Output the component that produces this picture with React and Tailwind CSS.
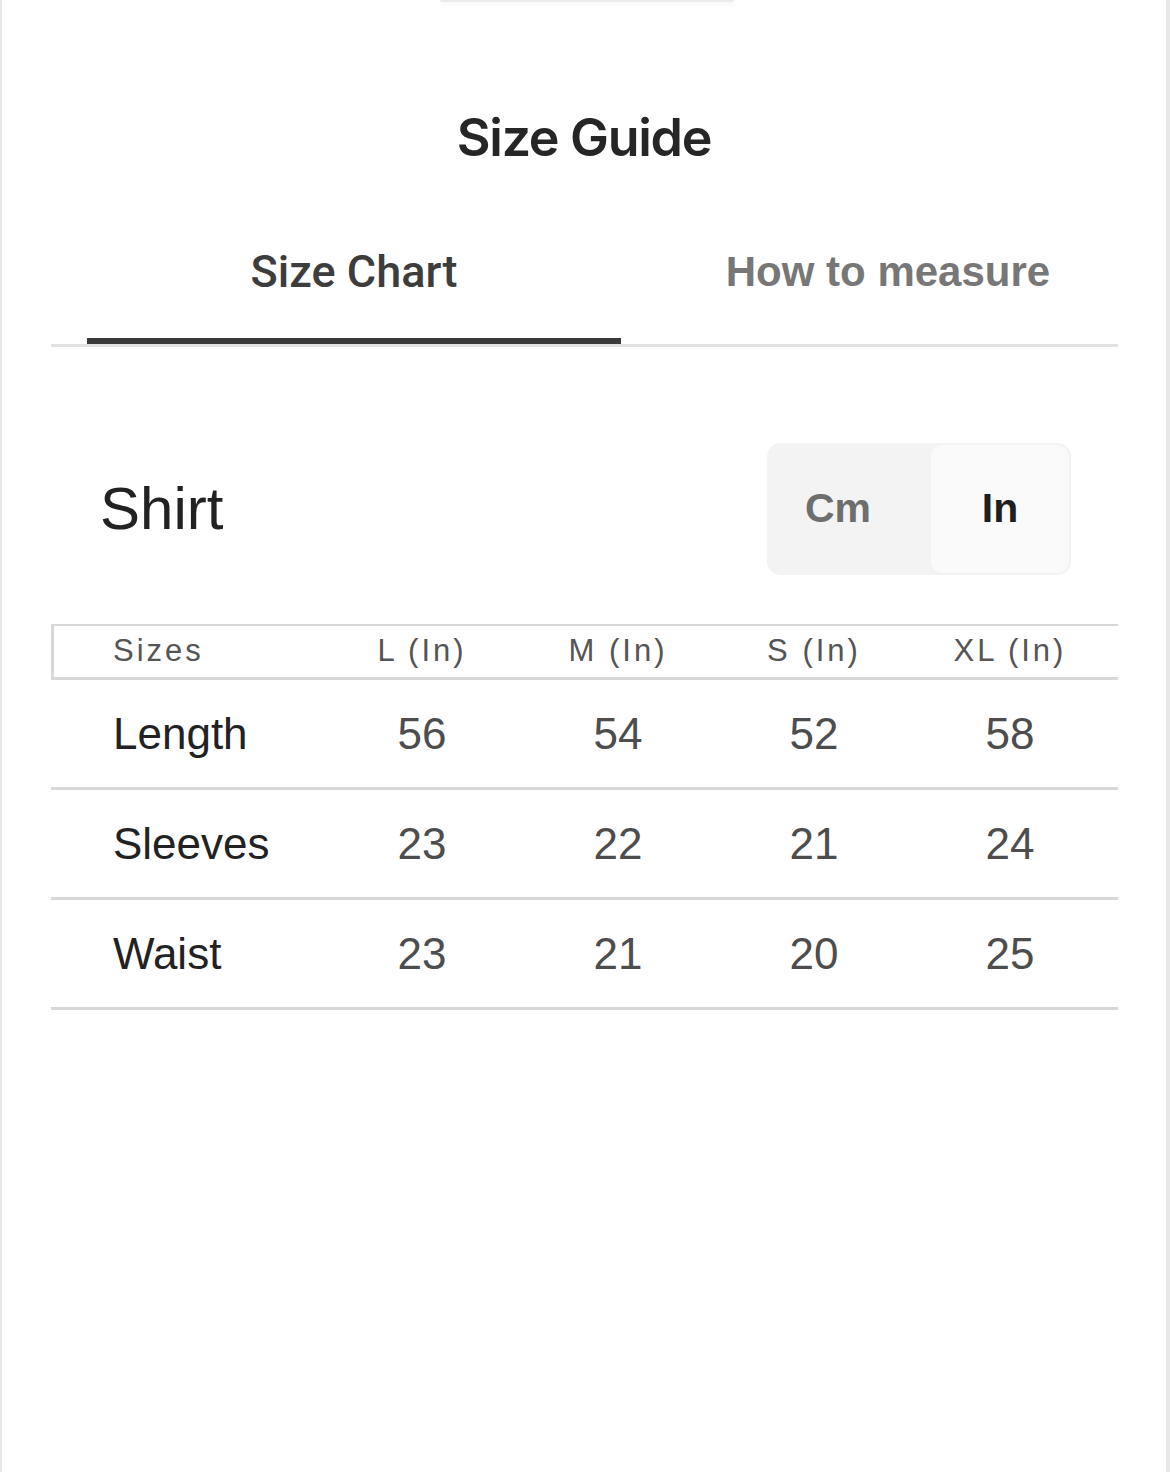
const rows = [
  { label: 'Length', values: ['56', '54', '52', '58'] },
  { label: 'Sleeves', values: ['23', '22', '21', '24'] },
  { label: 'Waist', values: ['23', '21', '20', '25'] },
]

const sizes = ['L (In)', 'M (In)', 'S (In)', 'XL (In)']

export default function App() {
  return (
    <div className="relative min-h-screen bg-white border-l-2 border-r-4 border-[#e8e8e8] font-['Liberation_Sans',Arial,sans-serif]">
      {/* sheet handle */}
      <div className="absolute top-0 left-[438px] w-[294px] h-[2px] rounded-b-full bg-[#ececec] shadow-[0_2px_4px_rgba(0,0,0,0.06)]" />

      <h1 className="pt-[108px] text-center text-[52px] leading-[60px] font-semibold tracking-[-0.025em] text-[#262626] font-['Inter',sans-serif]">
        Size Guide
      </h1>

      {/* tabs */}
      <div className="mt-[79px] ml-[49px] w-[1067px] border-b-[3px] border-[#e3e3e3]">
        <div className="flex ml-[36px] w-[1068px]">
          <div className="w-1/2 pb-[41px] text-center text-[45px] leading-[50px] font-medium text-[#3d3d3d] font-['Roboto',sans-serif] border-b-[6px] border-[#3a3a3a]">
            Size Chart
          </div>
          <div className="w-1/2 pb-[41px] text-center text-[42px] leading-[50px] font-bold text-[#777777] border-b-[6px] border-transparent">
            How to measure
          </div>
        </div>
      </div>

      {/* heading + unit toggle */}
      <div className="mt-[96px] ml-[98px] w-[971px] flex items-center justify-between">
        <h2 className="text-[60px] leading-[70px] text-[#222222]">Shirt</h2>
        <div className="flex w-[304px] p-[2px] rounded-[14px] bg-[#f3f3f3]">
          <button className="w-[138px] h-[128px] text-[41px] font-bold text-[#6e6e6e]">Cm</button>
          <button className="ml-auto w-[138px] h-[128px] rounded-[12px] bg-[#fafafa] text-[41px] font-bold text-[#1f1f1f]">
            In
          </button>
        </div>
      </div>

      {/* table */}
      <div className="mt-[49px] ml-[49px] w-[1067px]">
        <div className="grid grid-cols-[270px_196px_196px_196px_196px] items-center h-[56px] border-t-2 border-l-[3px] border-b-[3px] border-[#d8d8d8] text-[31px] tracking-[3px] text-[#555555]">
          <span className="pl-[59px]">Sizes</span>
          {sizes.map((s) => (
            <span key={s} className="text-center">{s}</span>
          ))}
        </div>
        {rows.map((row) => (
          <div
            key={row.label}
            className="grid grid-cols-[273px_196px_196px_196px_196px] items-center h-[110px] border-b-[3px] border-[#d8d8d8] text-[44px]"
          >
            <span className="pl-[62px] text-[#222222]">{row.label}</span>
            {row.values.map((v, i) => (
              <span key={i} className="text-center text-[#4d4d4d]">{v}</span>
            ))}
          </div>
        ))}
      </div>
    </div>
  )
}
